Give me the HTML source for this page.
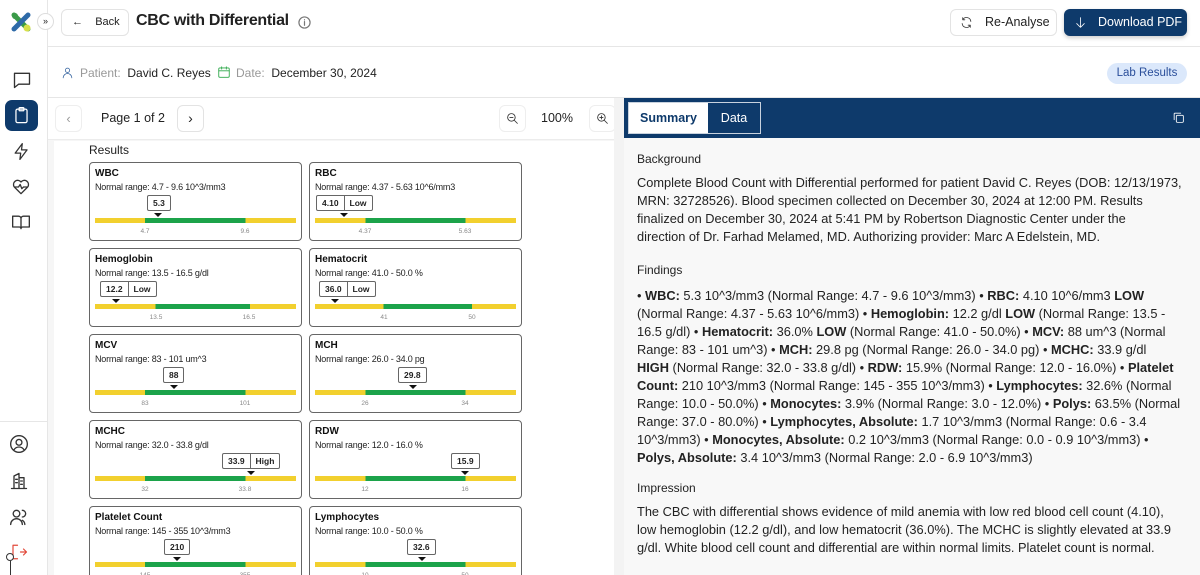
<!DOCTYPE html>
<html><head><meta charset="utf-8"><style>
*{box-sizing:border-box;margin:0;padding:0}
html,body{width:1200px;height:575px;overflow:hidden}
body{background:#fff;font-family:"Liberation Sans",sans-serif;color:#222;position:relative}
.abs{position:absolute}
svg.i{position:absolute;fill:none;stroke:#333;stroke-width:1.6;stroke-linecap:round;stroke-linejoin:round}
.card{position:absolute;width:213px;height:79px;border:1px solid #666;border-radius:4px;background:#fff;font-family:"Liberation Sans",sans-serif}
.card .t{position:absolute;left:5px;top:5px;font-size:10px;font-weight:bold;color:#111}
.card .r{position:absolute;left:5px;top:19px;font-size:9px;color:#222;letter-spacing:-.2px}
.card .bar{position:absolute;left:5px;top:55px;width:201px;height:5px;background:linear-gradient(90deg,#f2d02e 25%,#1ca34a 25%,#1ca34a 75%,#f2d02e 75%)}
.card .lab{position:absolute;top:65px;font-size:6.5px;color:#888;transform:translateX(-50%)}
.card .box{position:absolute;top:32px;height:16px;border:1px solid #666;border-radius:2px;font-size:8.5px;font-weight:bold;display:flex;align-items:center;background:#fff}
.card .box span{padding:0 5px;line-height:14px}
.card .box span+span{border-left:1px solid #666}
.card .tri{position:absolute;top:50px;width:0;height:0;border-left:4px solid transparent;border-right:4px solid transparent;border-top:4px solid #111;transform:translateX(-50%)}
.rp{position:absolute;left:637px;font-size:12.8px;color:#222;white-space:nowrap;line-height:18px}
.rp b{font-weight:bold}
.h{font-size:12px}
</style></head><body>
<!-- sidebar -->
<div class="abs" style="left:0;top:0;width:48px;height:575px;border-right:1px solid #e6e6e6;background:#fff"></div>
<svg class="abs" style="left:10px;top:11px" width="22" height="22" viewBox="0 0 22 22"><path d="M4 4L18 18" stroke="#3a9a48" stroke-width="5" stroke-linecap="round"/><path d="M18 4L4 18" stroke="#2e6aa8" stroke-width="5" stroke-linecap="round"/><circle cx="17" cy="17" r="3.5" fill="#d8e04a"/><circle cx="5" cy="5" r="3" fill="#3a9a48"/></svg>
<div class="abs" style="left:37px;top:13px;width:17px;height:17px;border:1px solid #ddd;border-radius:50%;background:#fff;font-size:9px;text-align:center;line-height:15px">»</div>
<svg class="i" style="left:12px;top:70px" width="20" height="20" viewBox="0 0 24 24"><path d="M3 4h18v13H8l-5 4z"/></svg>
<div class="abs" style="left:5px;top:100px;width:33px;height:31px;background:#0e3a6b;border-radius:7px"></div>
<svg class="i" style="left:12px;top:106px;stroke:#fff" width="19" height="19" viewBox="0 0 24 24"><rect x="5" y="4" width="14" height="17" rx="2"/><rect x="9" y="2" width="6" height="4" rx="1"/></svg>
<svg class="i" style="left:12px;top:142px" width="19" height="19" viewBox="0 0 24 24"><path d="M13 2L4 14h7l-1 8 9-12h-7z"/></svg>
<svg class="i" style="left:11px;top:177px" width="20" height="20" viewBox="0 0 24 24"><path d="M12 20l-8-8a5 5 0 0 1 8-6a5 5 0 0 1 8 6z"/><path d="M5 12h4l2-3 2 5 2-2h4"/></svg>
<svg class="i" style="left:11px;top:212px" width="20" height="20" viewBox="0 0 24 24"><path d="M2 5h7a3 3 0 0 1 3 3v12a2 2 0 0 0-2-2H2zM22 5h-7a3 3 0 0 0-3 3v12a2 2 0 0 1 2-2h8z"/></svg>
<div class="abs" style="left:0;top:421px;width:48px;border-top:1px solid #e6e6e6"></div>
<svg class="i" style="left:9px;top:434px" width="20" height="20" viewBox="0 0 24 24"><circle cx="12" cy="12" r="10"/><circle cx="12" cy="10" r="3.5"/><path d="M6 19a7 7 0 0 1 12 0"/></svg>
<svg class="i" style="left:9px;top:471px" width="20" height="20" viewBox="0 0 24 24"><path d="M6 21V6l6-3v18M12 8h6v13M3 21h18M8 10h2M8 14h2M14 12h2M14 16h2"/></svg>
<svg class="i" style="left:9px;top:507px" width="20" height="20" viewBox="0 0 24 24"><circle cx="9" cy="8" r="4"/><path d="M2 21a7 7 0 0 1 14 0M16 4a4 4 0 0 1 0 8M19 21a6 6 0 0 0-3-5"/></svg>
<svg class="i" style="left:10px;top:543px;stroke:#e24a3b" width="18" height="18" viewBox="0 0 24 24"><path d="M10 3H4v18h6M14 12h8M18 8l4 4-4 4"/></svg>
<div class="abs" style="left:6px;top:553px;width:8px;height:8px;border:1px solid #333;border-radius:50%;background:#fff"></div>
<div class="abs" style="left:10px;top:561px;width:1px;height:14px;background:#333"></div>

<!-- header -->
<div class="abs" style="left:48px;top:46px;width:1152px;border-top:1px solid #e6e6e6"></div>
<div class="abs" style="left:61px;top:9px;width:68px;height:27px;border:1px solid #e3e3e3;border-radius:6px;font-size:11px;line-height:25px;padding-left:10px">&#8592;&nbsp;&nbsp;&nbsp;&nbsp;Back</div>
<div class="abs" style="left:136px;top:12px;font-size:16px;font-weight:bold;color:#222;letter-spacing:-.3px">CBC with Differential</div>
<svg class="i" style="left:298px;top:16px;stroke:#777;stroke-width:1.3" width="13" height="13" viewBox="0 0 14 14"><circle cx="7" cy="7" r="6"/><path d="M7 6v4M7 4v.2"/></svg>
<div class="abs" style="left:950px;top:9px;width:107px;height:27px;border:1px solid #e3e3e3;border-radius:6px;font-size:12.5px;line-height:25px;padding-left:34px">Re-Analyse</div>
<svg class="i" style="left:960px;top:16px;stroke-width:1.5" width="13" height="13" viewBox="0 0 24 24"><path d="M20 10A8 8 0 0 0 5 7M4 14a8 8 0 0 0 15 3M5 3v4h4M19 21v-4h-4"/></svg>
<div class="abs" style="left:1064px;top:9px;width:123px;height:27px;background:#0e3a6b;border-radius:6px;color:#fff;font-size:12.5px;line-height:27px;padding-left:34px;box-shadow:0 2px 4px rgba(0,0,0,.2)">Download PDF</div>
<svg class="i" style="left:1074px;top:16px;stroke:#fff;stroke-width:1.5" width="13" height="13" viewBox="0 0 24 24"><path d="M12 3v18M5 14l7 7 7-7"/></svg>

<!-- patient row -->
<svg class="i" style="left:61px;top:66px;stroke:#2e5e9c;stroke-width:1.4" width="13" height="14" viewBox="0 0 24 24"><circle cx="12" cy="7" r="4"/><path d="M4 21a8 8 0 0 1 16 0"/></svg>
<div class="abs" style="left:80px;top:66px;font-size:12px;color:#999">Patient:&nbsp; <span style="color:#222">David C. Reyes</span></div>
<svg class="i" style="left:217px;top:65px;stroke:#2ea84a;stroke-width:1.5" width="14" height="14" viewBox="0 0 24 24"><rect x="3" y="5" width="18" height="16" rx="2"/><path d="M3 10h18M8 3v4M16 3v4"/></svg>
<div class="abs" style="left:236px;top:66px;font-size:12px;color:#999">Date:&nbsp; <span style="color:#222">December 30, 2024</span></div>
<div class="abs" style="left:1107px;top:63px;width:80px;height:21px;background:#dbe8fb;border-radius:11px;color:#2a4e9a;font-size:11.5px;line-height:21px;text-align:center">Lab Results</div>
<div class="abs" style="left:48px;top:97px;width:1152px;border-top:1px solid #e6e6e6"></div>

<!-- left toolbar -->
<div class="abs" style="left:48px;top:98px;width:576px;height:477px;background:#f6f6f6"></div>
<div class="abs" style="left:48px;top:98px;width:576px;height:42px;background:#fff;border-bottom:1px solid #ececec"></div>
<div class="abs" style="left:55px;top:105px;width:27px;height:27px;border:1px solid #eee;border-radius:6px;color:#999;text-align:center;line-height:25px;font-size:13px">&#8249;</div>
<div class="abs" style="left:101px;top:111px;font-size:12.5px">Page 1 of 2</div>
<div class="abs" style="left:177px;top:105px;width:27px;height:27px;border:1px solid #e3e3e3;border-radius:6px;text-align:center;line-height:25px;font-size:14px">&#8250;</div>
<div class="abs" style="left:499px;top:105px;width:27px;height:27px;border:1px solid #eee;border-radius:6px"></div>
<svg class="i" style="left:506px;top:112px;stroke-width:1.6" width="13" height="13" viewBox="0 0 24 24"><circle cx="10" cy="10" r="7"/><path d="M15 15l6 6M7 10h6"/></svg>
<div class="abs" style="left:541px;top:111px;font-size:12.5px">100%</div>
<div class="abs" style="left:589px;top:105px;width:27px;height:27px;border:1px solid #eee;border-radius:6px"></div>
<svg class="i" style="left:596px;top:112px;stroke-width:1.6" width="13" height="13" viewBox="0 0 24 24"><circle cx="10" cy="10" r="7"/><path d="M15 15l6 6M7 10h6M10 7v6"/></svg>
<div class="abs" style="left:54px;top:141px;width:560px;height:434px;background:#fff"></div>
<div class="abs" style="left:89px;top:143px;font-size:12px;color:#222">Results</div>

<!-- cards -->
<div class="card" style="left:89px;top:162px"><div class="t">WBC</div><div class="r">Normal range: 4.7 - 9.6 10^3/mm3</div>
<div class="box" style="left:57px"><span>5.3</span></div><div class="tri" style="left:68px"></div>
<div class="bar"></div><div class="lab" style="left:55px">4.7</div><div class="lab" style="left:155px">9.6</div></div>
<div class="card" style="left:309px;top:162px"><div class="t">RBC</div><div class="r">Normal range: 4.37 - 5.63 10^6/mm3</div>
<div class="box" style="left:6px"><span>4.10</span><span>Low</span></div><div class="tri" style="left:34px"></div>
<div class="bar"></div><div class="lab" style="left:55px">4.37</div><div class="lab" style="left:155px">5.63</div></div>

<div class="card" style="left:89px;top:248px"><div class="t">Hemoglobin</div><div class="r">Normal range: 13.5 - 16.5 g/dl</div>
<div class="box" style="left:10px"><span>12.2</span><span>Low</span></div><div class="tri" style="left:26px"></div>
<div class="bar" style="background:linear-gradient(90deg,#f2d02e 30%,#1ca34a 30%,#1ca34a 77%,#f2d02e 77%)"></div><div class="lab" style="left:66px">13.5</div><div class="lab" style="left:159px">16.5</div></div>
<div class="card" style="left:309px;top:248px"><div class="t">Hematocrit</div><div class="r">Normal range: 41.0 - 50.0 %</div>
<div class="box" style="left:9px"><span>36.0</span><span>Low</span></div><div class="tri" style="left:25px"></div>
<div class="bar" style="background:linear-gradient(90deg,#f2d02e 34%,#1ca34a 34%,#1ca34a 78%,#f2d02e 78%)"></div><div class="lab" style="left:74px">41</div><div class="lab" style="left:162px">50</div></div>

<div class="card" style="left:89px;top:334px"><div class="t">MCV</div><div class="r">Normal range: 83 - 101 um^3</div>
<div class="box" style="left:73px"><span>88</span></div><div class="tri" style="left:84px"></div>
<div class="bar"></div><div class="lab" style="left:55px">83</div><div class="lab" style="left:155px">101</div></div>
<div class="card" style="left:309px;top:334px"><div class="t">MCH</div><div class="r">Normal range: 26.0 - 34.0 pg</div>
<div class="box" style="left:88px"><span>29.8</span></div><div class="tri" style="left:103px"></div>
<div class="bar"></div><div class="lab" style="left:55px">26</div><div class="lab" style="left:155px">34</div></div>

<div class="card" style="left:89px;top:420px"><div class="t">MCHC</div><div class="r">Normal range: 32.0 - 33.8 g/dl</div>
<div class="box" style="left:132px"><span>33.9</span><span>High</span></div><div class="tri" style="left:161px"></div>
<div class="bar"></div><div class="lab" style="left:55px">32</div><div class="lab" style="left:155px">33.8</div></div>
<div class="card" style="left:309px;top:420px"><div class="t">RDW</div><div class="r">Normal range: 12.0 - 16.0 %</div>
<div class="box" style="left:141px"><span>15.9</span></div><div class="tri" style="left:155px"></div>
<div class="bar"></div><div class="lab" style="left:55px">12</div><div class="lab" style="left:155px">16</div></div>

<div class="card" style="left:89px;top:506px"><div class="t">Platelet Count</div><div class="r">Normal range: 145 - 355 10^3/mm3</div>
<div class="box" style="left:74px"><span>210</span></div><div class="tri" style="left:87px"></div>
<div class="bar"></div><div class="lab" style="left:55px">145</div><div class="lab" style="left:155px">355</div></div>
<div class="card" style="left:309px;top:506px"><div class="t">Lymphocytes</div><div class="r">Normal range: 10.0 - 50.0 %</div>
<div class="box" style="left:97px"><span>32.6</span></div><div class="tri" style="left:112px"></div>
<div class="bar"></div><div class="lab" style="left:55px">10</div><div class="lab" style="left:155px">50</div></div>

<!-- right panel -->
<div class="abs" style="left:614px;top:98px;width:10px;height:477px;background:#f3f3f3"></div>
<div class="abs" style="left:624px;top:98px;width:576px;height:477px;background:#f8f8f8"></div>
<div class="abs" style="left:624px;top:98px;width:576px;height:40px;background:#0e3a6b"></div>
<div class="abs" style="left:628px;top:102px;width:133px;height:32px;border:1px solid #c8d2de"></div>
<div class="abs" style="left:629px;top:103px;width:79px;height:30px;background:#fff;color:#0e3a6b;font-size:12.5px;font-weight:bold;text-align:center;line-height:30px">Summary</div>
<div class="abs" style="left:708px;top:103px;width:52px;height:30px;color:#fff;font-size:12.5px;text-align:center;line-height:30px">Data</div>
<svg class="i" style="left:1172px;top:111px;stroke:#fff;stroke-width:1.6" width="13" height="13" viewBox="0 0 24 24"><rect x="8" y="8" width="13" height="13" rx="2"/><path d="M4 16V5a1 1 0 0 1 1-1h11"/></svg>

<div class="rp h" style="top:150px">Background</div>
<div class="rp" style="top:174px">Complete Blood Count with Differential performed for patient David C. Reyes (DOB: 12/13/1973,<br>MRN: 32728526). Blood specimen collected on December 30, 2024 at 12:00 PM. Results<br>finalized on December 30, 2024 at 5:41 PM by Robertson Diagnostic Center under the<br>direction of Dr. Farhad Melamed, MD. Authorizing provider: Marc A Edelstein, MD.</div>
<div class="rp h" style="top:261px">Findings</div>
<div class="rp" style="top:287px">• <b>WBC:</b> 5.3 10^3/mm3 (Normal Range: 4.7 - 9.6 10^3/mm3) • <b>RBC:</b> 4.10 10^6/mm3 <b>LOW</b><br>(Normal Range: 4.37 - 5.63 10^6/mm3) • <b>Hemoglobin:</b> 12.2 g/dl <b>LOW</b> (Normal Range: 13.5 -<br>16.5 g/dl) • <b>Hematocrit:</b> 36.0% <b>LOW</b> (Normal Range: 41.0 - 50.0%) • <b>MCV:</b> 88 um^3 (Normal<br>Range: 83 - 101 um^3) • <b>MCH:</b> 29.8 pg (Normal Range: 26.0 - 34.0 pg) • <b>MCHC:</b> 33.9 g/dl<br><b>HIGH</b> (Normal Range: 32.0 - 33.8 g/dl) • <b>RDW:</b> 15.9% (Normal Range: 12.0 - 16.0%) • <b>Platelet<br>Count:</b> 210 10^3/mm3 (Normal Range: 145 - 355 10^3/mm3) • <b>Lymphocytes:</b> 32.6% (Normal<br>Range: 10.0 - 50.0%) • <b>Monocytes:</b> 3.9% (Normal Range: 3.0 - 12.0%) • <b>Polys:</b> 63.5% (Normal<br>Range: 37.0 - 80.0%) • <b>Lymphocytes, Absolute:</b> 1.7 10^3/mm3 (Normal Range: 0.6 - 3.4<br>10^3/mm3) • <b>Monocytes, Absolute:</b> 0.2 10^3/mm3 (Normal Range: 0.0 - 0.9 10^3/mm3) •<br><b>Polys, Absolute:</b> 3.4 10^3/mm3 (Normal Range: 2.0 - 6.9 10^3/mm3)</div>
<div class="rp h" style="top:479px">Impression</div>
<div class="rp" style="top:503px">The CBC with differential shows evidence of mild anemia with low red blood cell count (4.10),<br>low hemoglobin (12.2 g/dl), and low hematocrit (36.0%). The MCHC is slightly elevated at 33.9<br>g/dl. White blood cell count and differential are within normal limits. Platelet count is normal.</div>
</body></html>
